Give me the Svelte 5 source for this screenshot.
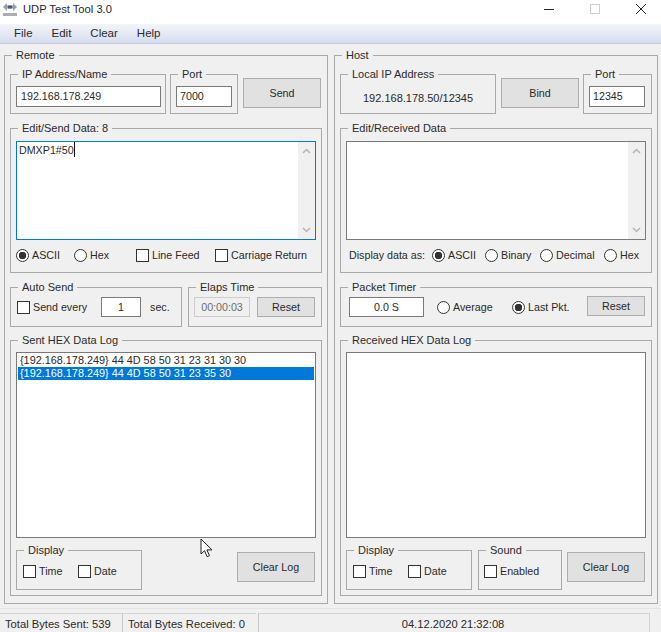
<script>
	const menus = ['File', 'Edit', 'Clear', 'Help'];
	const dataModes = ['ASCII', 'Binary', 'Decimal', 'Hex'];
</script>

{#snippet radio(text, on = false)}
	<span class="opt">
		<span class="radio" class:on></span>
		<span>{text}</span>
	</span>
{/snippet}

{#snippet check(text)}
	<span class="opt">
		<span class="box"></span>
		<span>{text}</span>
	</span>
{/snippet}

{#snippet scrollbar()}
	<div class="scroll">
		<svg width="9" height="6" viewBox="0 0 9 6"><path d="M1 5l3.5-3.5L8 5" /></svg>
		<svg width="9" height="6" viewBox="0 0 9 6"><path d="M1 1l3.5 3.5L8 1" /></svg>
	</div>
{/snippet}

<div class="window">
	<header class="title">
		<svg class="appicon" width="16" height="16" viewBox="0 0 16 16">
			<rect x="1" y="12" width="14" height="3" fill="#a9adb4" />
			<path d="M1 6l4-4v2.500h6V2l4 4-4 4V7.500H5V10z" fill="#9a9fa6" />
			<path d="M6 4.500h4v3H6z" fill="#4a5a88" />
		</svg>
		<span class="caption">UDP Test Tool 3.0</span>
		<div class="winbtns">
			<svg width="12" height="12" viewBox="0 0 12 12"><path d="M1 6.500h10" stroke="#222" /></svg>
			<svg width="12" height="12" viewBox="0 0 12 12"><rect x="1.500" y="1.500" width="9" height="9" fill="none" stroke="#cfcfcf" /></svg>
			<svg width="12" height="12" viewBox="0 0 12 12"><path d="M1 1l10 10M11 1L1 11" stroke="#222" /></svg>
		</div>
	</header>

	<nav class="menu">
		{#each menus as m}
			<span>{m}</span>
		{/each}
	</nav>

	<main class="panels">
		<fieldset class="panel">
			<legend>Remote</legend>
			<div class="row top">
				<fieldset class="group ip">
					<legend>IP Address/Name</legend>
					<div class="field ipfield">192.168.178.249</div>
				</fieldset>
				<fieldset class="group port">
					<legend>Port</legend>
					<div class="field portfield">7000</div>
				</fieldset>
				<button class="btn send">Send</button>
			</div>

			<fieldset class="group edit">
				<legend>Edit/Send Data: 8</legend>
				<div class="textarea focus">
					<span class="typed">DMXP1#50</span>
					{@render scrollbar()}
				</div>
				<div class="opts sendopts">
					{@render radio('ASCII', true)}
					{@render radio('Hex')}
					{@render check('Line Feed')}
					{@render check('Carriage Return')}
				</div>
			</fieldset>

			<div class="row timers">
				<fieldset class="group auto">
					<legend>Auto Send</legend>
					<div class="inline">
						{@render check('Send every')}
						<div class="field interval">1</div>
						<span>sec.</span>
					</div>
				</fieldset>
				<fieldset class="group elaps">
					<legend>Elaps Time</legend>
					<div class="inline">
						<div class="field clock">00:00:03</div>
						<button class="btn reset">Reset</button>
					</div>
				</fieldset>
			</div>

			<fieldset class="group log">
				<legend>Sent HEX Data Log</legend>
				<div class="list">
					<div class="item">&#123;192.168.178.249&#125; 44 4D 58 50 31 23 31 30 30</div>
					<div class="item selected">&#123;192.168.178.249&#125; 44 4D 58 50 31 23 35 30</div>
				</div>
				<div class="logfoot">
					<fieldset class="group display">
						<legend>Display</legend>
						<div class="opts displayopts">
							{@render check('Time')}
							{@render check('Date')}
						</div>
					</fieldset>
					<button class="btn clear push">Clear Log</button>
				</div>
			</fieldset>
		</fieldset>

		<fieldset class="panel">
			<legend>Host</legend>
			<div class="row top">
				<fieldset class="group ip">
					<legend>Local IP Address</legend>
					<div class="localip">192.168.178.50/12345</div>
				</fieldset>
				<button class="btn bind">Bind</button>
				<fieldset class="group port hostport">
					<legend>Port</legend>
					<div class="field portfield">12345</div>
				</fieldset>
			</div>

			<fieldset class="group edit">
				<legend>Edit/Received Data</legend>
				<div class="textarea">
					{@render scrollbar()}
				</div>
				<div class="opts recvopts">
					<span>Display data as:</span>
					{#each dataModes as mode, i}
						{@render radio(mode, i === 0)}
					{/each}
				</div>
			</fieldset>

			<fieldset class="group packet">
				<legend>Packet Timer</legend>
				<div class="inline">
					<div class="field timer">0.0 S</div>
					<div class="opts packetopts">
						{@render radio('Average')}
						{@render radio('Last Pkt.', true)}
					</div>
					<button class="btn reset lift">Reset</button>
				</div>
			</fieldset>

			<fieldset class="group log">
				<legend>Received HEX Data Log</legend>
				<div class="list"></div>
				<div class="logfoot">
					<fieldset class="group display">
						<legend>Display</legend>
						<div class="opts displayopts">
							{@render check('Time')}
							{@render check('Date')}
						</div>
					</fieldset>
					<fieldset class="group sound">
						<legend>Sound</legend>
						<div class="opts soundopts">
							{@render check('Enabled')}
						</div>
					</fieldset>
					<button class="btn clear">Clear Log</button>
				</div>
			</fieldset>
		</fieldset>
	</main>

	<footer class="status">
		<span class="cell sent">Total Bytes Sent: 539</span>
		<span class="cell received">Total Bytes Received: 0</span>
		<span class="cell clockcell">04.12.2020 21:32:08</span>
	</footer>

	<svg class="cursor" width="13" height="20" viewBox="0 0 13 20">
		<path d="M1 1v15l3.500-3.300 2.600 6 2.400-1-2.600-5.800H12z" fill="#fff" stroke="#222" stroke-linejoin="round" />
	</svg>
</div>

<style>
	:global(body) {
		margin: 0;
		background: #f0f0f0;
	}

	.window {
		position: relative;
		width: 661px;
		height: 632px;
		overflow: hidden;
		background: #f0f0f0;
		color: #2a2a2a;
		font-family: 'Liberation Sans', Arial, sans-serif;
		font-size: 10.7px;
		line-height: 14px;
	}

	.title {
		height: 24px;
		display: flex;
		align-items: center;
		background: #fff;
		font-size: 11.2px;
	}
	.appicon {
		margin-left: 2px;
		margin-top: -6px;
	}
	.caption {
		margin-left: 5px;
		margin-top: -7px;
	}
	.winbtns {
		margin-left: auto;
		display: flex;
		gap: 34px;
		margin-right: 14px;
		margin-top: -6px;
	}

	.menu {
		height: 20px;
		box-sizing: border-box;
		display: flex;
		gap: 19px;
		padding: 2px 0 0 14px;
		background: linear-gradient(#f3f5fb, #d6dcee);
		border-bottom: 1px solid #c4cbdc;
		font-size: 11.5px;
	}

	.panels {
		display: flex;
		gap: 6px;
		padding: 4px 0 0 4px;
	}

	fieldset {
		box-sizing: border-box;
		margin: 0;
		padding: 0;
		min-width: 0;
		border: 1px solid #a9a9a9;
	}
	legend {
		margin-left: 2px;
		padding: 0 4px;
		height: 14px;
		line-height: 14px;
		font-size: 11px;
	}

	.panel {
		width: 324px;
		height: 556px;
		padding: 5px 5px 0;
		display: flex;
		flex-direction: column;
		gap: 7px;
	}

	.row {
		display: flex;
	}

	.group {
		flex: none;
	}

	.top {
		height: 47px;
	}
	.ip {
		width: 156px;
		height: 47px;
		padding: 5px 0 0 5px;
	}
	.port {
		width: 68px;
		height: 47px;
		margin-left: 4px;
		padding: 5px 0 0 5px;
	}
	.hostport {
		width: 69px;
		margin-left: 0;
	}

	.field {
		box-sizing: border-box;
		background: #fff;
		border: 1px solid #7a7a7a;
		padding-left: 3px;
		white-space: nowrap;
	}
	.ipfield {
		width: 145px;
		height: 21px;
		line-height: 19px;
		padding-left: 4px;
	}
	.portfield {
		width: 56px;
		height: 21px;
		line-height: 19px;
	}
	.localip {
		padding: 5px 0 0 17px;
		font-size: 11px;
	}

	.btn {
		box-sizing: border-box;
		padding: 0;
		background: #e1e1e1;
		border: 1px solid #adadad;
		color: #2a2a2a;
		font: inherit;
		flex: none;
	}
	.send {
		width: 78px;
		height: 30px;
		margin: 11px 0 0 5px;
	}
	.bind {
		width: 78px;
		height: 30px;
		margin: 11px 4px 0 5px;
	}

	.edit {
		height: 152px;
		padding: 6px 5px 0;
	}
	.textarea {
		box-sizing: border-box;
		width: 300px;
		height: 99px;
		display: flex;
		justify-content: space-between;
		background: #fff;
		border: 1px solid #7a7a7a;
	}
	.focus {
		border-color: #0078d7;
	}
	.typed {
		padding: 1px 0 0 2px;
		height: 14px;
		border-right: 1px solid #111;
	}
	.scroll {
		margin-left: auto;
		width: 17px;
		height: 97px;
		box-sizing: border-box;
		padding: 6px 0 6px;
		display: flex;
		flex-direction: column;
		justify-content: space-between;
		align-items: center;
		background: #f0f0f0;
	}
	.scroll path {
		fill: none;
		stroke: #b5b5b5;
		stroke-width: 1.500;
	}

	.opts {
		display: grid;
		align-items: center;
	}
	.opt {
		display: flex;
		align-items: center;
		white-space: nowrap;
	}
	.radio {
		flex: none;
		box-sizing: border-box;
		width: 13px;
		height: 13px;
		margin-right: 3px;
		border: 1px solid #333;
		border-radius: 50%;
		background: #fff;
	}
	.radio.on {
		background: radial-gradient(circle, #333 3.500px, #fff 4px);
	}
	.box {
		flex: none;
		box-sizing: border-box;
		width: 13px;
		height: 13px;
		margin-right: 3px;
		border: 1px solid #333;
		background: #fff;
	}

	.sendopts {
		margin-top: 8px;
		grid-template-columns: 58px 62px 79px 1fr;
	}
	.recvopts {
		margin-top: 8px;
		padding-left: 3px;
		grid-template-columns: 83px 53px 55px 64px 1fr;
		white-space: nowrap;
	}

	.timers {
		gap: 6px;
		margin-bottom: -1px;
	}
	.auto {
		width: 172px;
		height: 47px;
		padding: 3px 0 0 6px;
	}
	.auto legend,
	.display legend {
		margin-left: 1px;
	}
	.elaps {
		width: 134px;
		height: 47px;
		padding: 3px 0 0 5px;
	}
	.inline {
		display: flex;
		align-items: center;
	}
	.interval {
		width: 40px;
		height: 20px;
		line-height: 18px;
		margin: 0 9px 0 14px;
		padding: 0;
		text-align: center;
	}
	.clock {
		width: 56px;
		height: 20px;
		line-height: 18px;
		padding: 0;
		text-align: center;
		background: #f0f0f0;
		border-color: #ccc;
		color: #6d6d6d;
	}
	.reset {
		width: 58px;
		height: 20px;
		margin-left: 7px;
	}
	.lift {
		margin-left: 0;
		margin-top: -2px;
	}

	.packet {
		height: 47px;
		margin-bottom: -1px;
		padding: 3px 0 0 8px;
	}
	.packet legend {
		margin-left: -1px;
	}
	.timer {
		width: 75px;
		height: 20px;
		line-height: 18px;
		padding: 0;
		text-align: center;
	}
	.packetopts {
		margin-left: 13px;
		width: 150px;
		grid-template-columns: 75px 75px;
	}

	.log {
		height: 263px;
		padding: 5px 5px 0;
	}
	.list {
		box-sizing: border-box;
		width: 300px;
		height: 186px;
		padding: 1px;
		background: #fff;
		border: 1px solid #7a7a7a;
	}
	.item {
		height: 13px;
		line-height: 13px;
		padding-left: 2px;
		white-space: nowrap;
		font-size: 10.85px;
	}
	.selected {
		background: #0078d7;
		color: #fff;
	}

	.logfoot {
		display: flex;
		margin-top: 5px;
	}
	.display {
		width: 126px;
		height: 47px;
		padding: 7px 0 0 6px;
	}
	.displayopts {
		grid-template-columns: 55px 1fr;
	}
	.sound {
		width: 84px;
		height: 47px;
		margin-left: 6px;
		padding: 7px 0 0 5px;
	}
	.soundopts {
		grid-template-columns: 1fr;
	}
	.clear {
		width: 78px;
		height: 30px;
		margin: 9px 0 0 5px;
	}
	.push {
		margin-left: 95px;
	}

	.status {
		position: absolute;
		left: 0;
		right: 0;
		bottom: 0;
		height: 24px;
		display: flex;
		border-top: 1px solid #e4e4e4;
		box-sizing: border-box;
		font-size: 11.2px;
		padding-top: 4px;
	}
	.cell {
		box-sizing: border-box;
		height: 20px;
		line-height: 20px;
		white-space: nowrap;
		border-top: 1px solid #d4d4d4;
		border-left: 1px solid #c8c8c8;
	}
	.sent {
		width: 122px;
		padding-left: 5px;
		border-left: 0;
	}
	.received {
		width: 134px;
		padding-left: 5px;
	}
	.clockcell {
		width: 392px;
		margin-left: 2px;
		padding-right: 2px;
		text-align: center;
		border-right: 1px solid #d4d4d4;
	}

	.cursor {
		position: absolute;
		left: 200px;
		top: 538px;
	}
</style>
